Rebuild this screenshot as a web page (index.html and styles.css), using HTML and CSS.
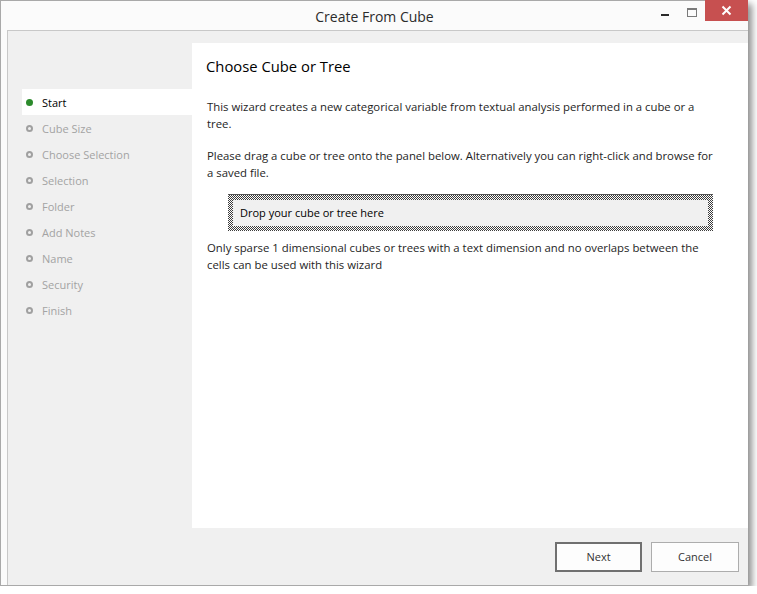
FILE: index.html
```html
<!DOCTYPE html>
<html lang="en">
<head>
  <meta charset="UTF-8">
  <title>Create From Cube</title>
  <link rel="stylesheet" href="styles.css">
</head>
<body>

  <div class="window">
    <div class="titlebar">
      <span class="title">Create From Cube</span>
      <div class="controls">
        <span class="ctl-min"></span>
        <span class="ctl-max"></span>
        <span class="ctl-close">
          <svg width="11" height="11" viewBox="0 0 11 11">
            <path d="M1.5 1.5 L9.5 9.5 M9.5 1.5 L1.5 9.5" stroke="#fff" stroke-width="2"/>
          </svg>
        </span>
      </div>
    </div>

    <div class="client">
      <div class="wizard">
        <ul class="steps">
          <li class="step active"><i></i>Start</li>
          <li class="step"><i></i>Cube Size</li>
          <li class="step"><i></i>Choose Selection</li>
          <li class="step"><i></i>Selection</li>
          <li class="step"><i></i>Folder</li>
          <li class="step"><i></i>Add Notes</li>
          <li class="step"><i></i>Name</li>
          <li class="step"><i></i>Security</li>
          <li class="step"><i></i>Finish</li>
        </ul>

        <div class="page">
          <h1>Choose Cube or Tree</h1>
          <p>This wizard creates a new categorical variable from textual analysis performed in a cube or a tree.</p>
          <p>Please drag a cube or tree onto the panel below. Alternatively you can right-click and browse for a saved file.</p>
          <div class="drop">
            <div class="drop-inner">Drop your cube or tree here</div>
          </div>
          <p>Only sparse 1 dimensional cubes or trees with a text dimension and no overlaps between the cells can be used with this wizard</p>
        </div>
      </div>

      <div class="footer">
        <button class="btn default">Next</button>
        <button class="btn">Cancel</button>
      </div>
    </div>
  </div>

</body>
</html>
```

FILE: styles.css
```css
body {
  margin: 0;
  background: #fff;
  font-family: "Open Sans", "Noto Sans", sans-serif;
  font-size: 11px;
  color: #1e1e1e;
}
.window {
  width: 747px;
  height: 584px;
  border: 1px solid #a9a9a9;
  border-right: none;
  background: #fbfbfb;
  box-shadow: 4px 4px 7px rgba(0, 0, 0, 0.45);
  display: flex;
  flex-direction: column;
}
.titlebar {
  height: 29px;
  position: relative;
  display: flex;
  align-items: center;
  justify-content: center;
}
.title {
  font-size: 14px;
  color: #2b2b2b;
  margin-top: 1px;
}
.controls {
  position: absolute;
  top: -1px;
  right: 0;
  display: flex;
  align-items: flex-start;
}
.ctl-min {
  width: 8px;
  height: 2px;
  background: #2a2a2a;
  margin: 14px 18px 0 0;
}
.ctl-max {
  width: 8px;
  height: 6px;
  border: 1px solid #7a7a7a;
  border-top-width: 2px;
  margin: 8px 8px 0 0;
}
.ctl-close {
  width: 43px;
  height: 21px;
  background: #c75050;
  display: flex;
  align-items: center;
  justify-content: center;
}
.client {
  flex: 1;
  margin-left: 6px;
  border-top: 1px solid #c8c8c8;
  border-left: 1px solid #c8c8c8;
  background: #f0f0f0;
  display: flex;
  flex-direction: column;
}
.wizard {
  flex: 1;
  display: flex;
  padding-top: 12px;
}
.steps {
  list-style: none;
  margin: 0;
  padding: 46px 0 0 14px;
  width: 170px;
}
.step {
  height: 26px;
  display: flex;
  align-items: center;
  padding-left: 4px;
  color: #a3a3a3;
}
.step i {
  width: 3px;
  height: 3px;
  border: 2px solid #a0a0a0;
  border-radius: 50%;
  margin-right: 9px;
}
.step.active {
  background: #fff;
  color: #000;
}
.step.active i {
  width: 7px;
  height: 7px;
  border: none;
  background: #2b8a2b;
}
.page {
  flex: 1;
  background: #fff;
  padding: 0 27px 0 14px;
}
.page h1 {
  font-size: 14.8px;
  font-weight: normal;
  color: #000;
  margin: 13px 0 23px;
}
.page p {
  font-size: 11.35px;
  margin: 0 0 16px 1px;
  line-height: 16.5px;
}
.drop {
  margin: -3px 8px 9px 22px;
  padding: 5px;
  border-top: 1px solid #555;
  background: repeating-conic-gradient(#3c3c3c 0 25%, #fff 0 50%) 0 0 / 2px 2px;
}
.drop-inner {
  background: #f0f0f0;
  height: 26px;
  line-height: 26px;
  padding-left: 7px;
  color: #000;
}
.footer {
  height: 57px;
  display: flex;
  justify-content: flex-end;
  align-items: center;
  gap: 9px;
  padding-right: 9px;
}
.btn {
  width: 88px;
  height: 30px;
  border: 1px solid #adadad;
  background: #fdfdfd;
  font-family: inherit;
  font-size: 11px;
  color: #333;
}
.btn.default {
  border: 2px solid #707070;
  width: 87px;
}
```
